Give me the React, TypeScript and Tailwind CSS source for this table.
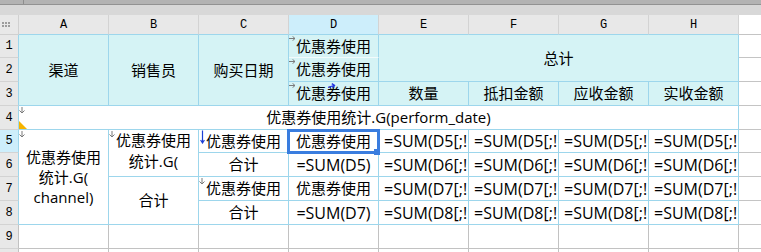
import React from 'react';

const letters = ['A', 'B', 'C', 'D', 'E', 'F', 'G', 'H'];
const colStart = ['col-start-2', 'col-start-3', 'col-start-4', 'col-start-5', 'col-start-6', 'col-start-7', 'col-start-8', 'col-start-9'];
const rowStart = ['row-start-1', 'row-start-2', 'row-start-3', 'row-start-4', 'row-start-5', 'row-start-6', 'row-start-7', 'row-start-8', 'row-start-9', 'row-start-10', 'row-start-11'];

const blue = 'border-[#9dd6ec]';
const cyan = 'bg-[#d5f3f5]';
const centered = 'flex items-center justify-center whitespace-nowrap overflow-hidden';

// small grey arrow in a cell's top-left corner (expand downwards)
const DownMark = () => (
  <svg width="6" height="7" viewBox="0 0 6 7" className="absolute left-[0px] top-[1px]">
    <path d="M3 0V6M0.5 3.5L3 6L5.5 3.5" stroke="#7b7b7b" fill="none" strokeWidth="1" />
  </svg>
);

// small grey arrow pointing right (expand sideways)
const RightMark = () => (
  <svg width="7" height="5" viewBox="0 0 7 5" className="absolute left-[0px] top-[1px]">
    <path d="M0 2.5H6M3.5 0.3L6 2.5L3.5 4.7" stroke="#7b7b7b" fill="none" strokeWidth="1" />
  </svg>
);

const CornerDots = () => (
  <svg width="8" height="6" viewBox="0 0 8 6" className="ml-[2px] mt-[7px]">
    {[0, 3, 6].map(x =>
      [0, 3].map(y => <rect key={`${x}-${y}`} x={x} y={y} width="2" height="2" fill="#9c9c9c" />)
    )}
  </svg>
);

// sheet row n sits on grid row n + 1, i.e. rowStart[n]
const Formula = ({ col, row }: { col: number; row: number }) => (
  <div className={`${colStart[col]} ${rowStart[row]} border-r border-b ${blue} bg-white flex items-center pl-[5px] whitespace-nowrap overflow-hidden text-[16px]`}>
    {`=SUM(D${row}[;!`}
  </div>
);

export default function App() {
  return (
    <div className="w-[761px] h-[252px] overflow-hidden bg-white text-[15px] text-black font-['Open_Sans','Noto_Sans_CJK_SC',sans-serif]">
      {/* strip above the sheet */}
      <div className="flex h-[4px] bg-[#b3b3b3]">
        <div className="w-[24px] border-r border-[#8e8e8e]" />
      </div>
      <div className="h-px bg-[#929292]" />
      <div className="h-[10px] bg-[#d8d8d8]" />

      <div className="grid grid-cols-[19px_repeat(8,90px)_1fr] grid-rows-[20px_23px_24px_24px_24px_23px_24px_24px_24px_24px_24px]">
        {/* column headers */}
        <div className="col-start-1 row-start-1 bg-[#e8e8e8] border-r border-b border-[#d0d0d0]">
          <CornerDots />
        </div>
        {letters.map((l, i) => (
          <div
            key={l}
            className={`${colStart[i]} row-start-1 flex items-center justify-center border-r border-b border-r-[#d3d3d3] border-b-[#9dd6ec] font-['Liberation_Mono',monospace] text-[12px] ${l === 'D' ? 'bg-[#cdeefb]' : 'bg-[#e8e8e8]'}`}
          >
            {l}
          </div>
        ))}

        {/* row headers */}
        {[1, 2, 3, 4, 5, 6, 7, 8, 9, 10].map(n => (
          <div
            key={n}
            className={`col-start-1 ${rowStart[n]} flex items-center justify-center border-r border-b border-b-[#d3d3d3] ${n <= 8 ? 'border-r-[#9dd6ec]' : 'border-r-[#c2c2c2]'} ${n === 5 ? 'bg-[#cdeefb]' : 'bg-[#e8e8e8]'} font-['Liberation_Mono',monospace] text-[12px]`}
          >
            {n}
          </div>
        ))}

        {/* blank column right of H */}
        {rowStart.map(r => (
          <div key={r} className={`col-start-10 ${r} bg-white border-b border-[#c4c4c4]`} />
        ))}

        {/* title block */}
        <div className={`col-start-2 row-start-2 row-span-3 border-r border-b ${blue} ${cyan} ${centered}`}>渠道</div>
        <div className={`col-start-3 row-start-2 row-span-3 border-r border-b ${blue} ${cyan} ${centered}`}>销售员</div>
        <div className={`col-start-4 row-start-2 row-span-3 border-r border-b ${blue} ${cyan} ${centered}`}>购买日期</div>
        <div className={`relative col-start-5 row-start-2 border-r border-b border-r-[#9dd6ec] border-b-[#f2fbfc] ${cyan} ${centered}`}>
          <RightMark />
          优惠券使用
        </div>
        <div className={`relative col-start-5 row-start-3 border-r border-b ${blue} ${cyan} ${centered}`}>
          <RightMark />
          优惠券使用
        </div>
        <div className={`relative col-start-5 row-start-4 border-r border-b ${blue} ${cyan} ${centered}`}>
          <RightMark />
          优惠券使用
          <svg width="8" height="6" viewBox="0 0 8 6" className="absolute left-[39px] top-[1px]">
            <path d="M0 4.5L6 2.5M3.8 0.6L6.5 2.4L4.4 4.6" stroke="#2436e0" fill="none" strokeWidth="1.3" />
          </svg>
        </div>
        <div className={`col-start-6 col-span-4 row-start-2 row-span-2 border-r border-b ${blue} ${cyan} ${centered}`}>总计</div>
        {['数量', '抵扣金额', '应收金额', '实收金额'].map((t, i) => (
          <div key={t} className={`${colStart[i + 4]} row-start-4 border-r border-b ${blue} ${cyan} ${centered}`}>
            {t}
          </div>
        ))}

        {/* group row */}
        <div className={`relative col-start-2 col-span-8 row-start-5 border-r border-b ${blue} bg-white ${centered}`}>
          <DownMark />
          优惠券使用统计.G(perform_date)
          <svg width="8" height="8" viewBox="0 0 8 8" className="absolute left-0 bottom-0">
            <polygon points="0,0 0,8 8,8" fill="#f6b400" />
          </svg>
        </div>

        {/* body */}
        <div className={`relative col-start-2 row-start-6 row-span-4 border-r border-b ${blue} bg-white flex flex-col items-center justify-center leading-[20px]`}>
          <DownMark />
          <span>优惠券使用</span>
          <span>统计.G(</span>
          <span>channel)</span>
        </div>
        <div className={`relative col-start-3 row-start-6 row-span-2 border-r border-b ${blue} bg-white flex flex-col items-center overflow-hidden leading-[21px] whitespace-nowrap`}>
          <DownMark />
          <span>优惠券使用</span>
          <span>统计.G(</span>
          <span>channel)</span>
        </div>
        <div className={`col-start-3 row-start-8 row-span-2 border-r border-b ${blue} bg-white ${centered}`}>合计</div>

        <div className={`relative col-start-4 row-start-6 border-r border-b ${blue} bg-white ${centered}`}>
          <svg width="5" height="14" viewBox="0 0 5 14" className="absolute left-[1px] top-0">
            <path d="M2.5 0.5V13M0.6 10L2.5 13L4.4 10" stroke="#1c3fd6" fill="none" strokeWidth="1.2" />
          </svg>
          优惠券使用
        </div>
        <div className={`col-start-4 row-start-7 border-r border-b ${blue} bg-white ${centered}`}>合计</div>
        <div className={`relative col-start-4 row-start-8 border-r border-b ${blue} bg-white ${centered}`}>
          <DownMark />
          优惠券使用
        </div>
        <div className={`col-start-4 row-start-9 border-r border-b ${blue} bg-white ${centered}`}>合计</div>

        <div className={`relative col-start-5 row-start-6 border-r border-b ${blue} bg-white ${centered} overflow-visible`}>
          优惠券使用
          <div className="absolute -left-[2px] -top-[1px] -right-[2px] -bottom-[2px] border-[3px] border-[#3a7ddf] pointer-events-none" />
          <div className="absolute -right-[2px] -bottom-[3px] w-[6px] h-[6px] bg-[#3a7ddf]" />
        </div>
        <div className={`col-start-5 row-start-7 border-r border-b ${blue} bg-white ${centered} text-[16px]`}>=SUM(D5)</div>
        <div className={`col-start-5 row-start-8 border-r border-b ${blue} bg-white ${centered}`}>优惠券使用</div>
        <div className={`col-start-5 row-start-9 border-r border-b ${blue} bg-white ${centered} text-[16px]`}>=SUM(D7)</div>

        {[5, 6, 7, 8].map(row =>
          [4, 5, 6, 7].map(col => <Formula key={`${row}-${col}`} col={col} row={row} />)
        )}

        {/* empty rows */}
        {[9, 10].map(row =>
          colStart.map(c => (
            <div key={`${row}-${c}`} className={`${c} ${rowStart[row]} bg-white border-r border-b border-[#c2c2c2]`} />
          ))
        )}
      </div>
    </div>
  );
}
